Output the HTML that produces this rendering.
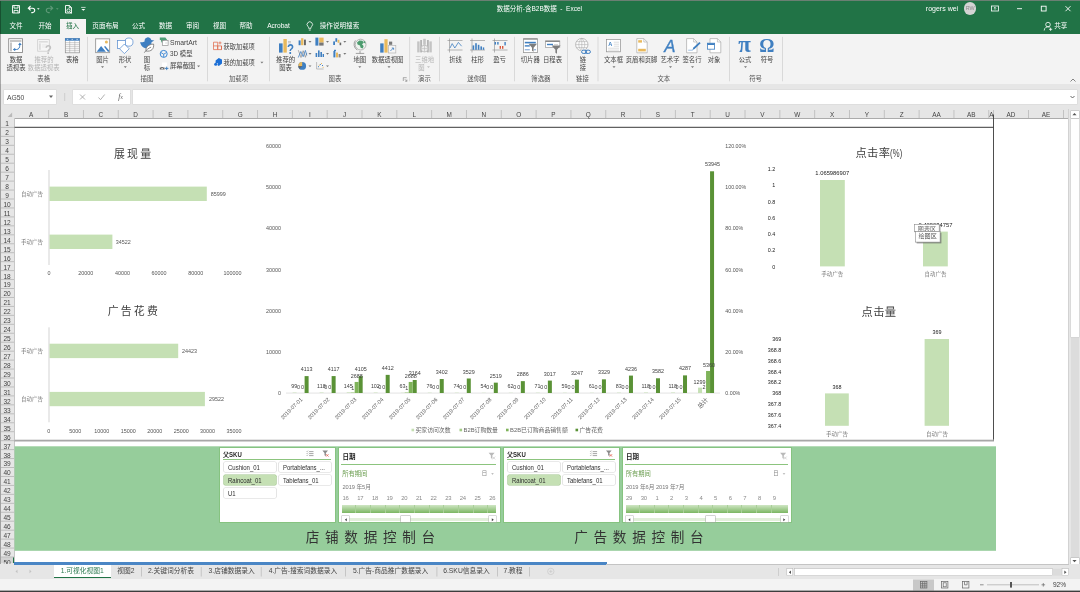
<!DOCTYPE html>
<html lang="zh-CN"><head><meta charset="utf-8"><title>数据分析-含B2B数据 - Excel</title>
<style>
html,body{margin:0;padding:0}
body{will-change:transform;width:1080px;height:592px;position:relative;overflow:hidden;background:#fff;font-family:"Liberation Sans","Noto Sans CJK SC",sans-serif;color:#444}
.a{position:absolute}
.t{position:absolute;white-space:nowrap;line-height:1}
.c{transform:translateX(-50%)}
svg{position:absolute;left:0;top:0;overflow:visible}
svg text{font-family:"Liberation Sans","Noto Sans CJK SC",sans-serif}
#titlebar{left:0;top:0;width:1080px;height:34px;background:#217346}
#ribbon{left:0;top:34px;width:1080px;height:50px;background:#f3f3f3}
#fbar{left:0;top:84px;width:1080px;height:25px;background:#e6e6e6}
#colhdr{left:0;top:109px;width:1069px;height:9px;background:#e6e6e6;border-bottom:1px solid #ababab}
#rowhdr{left:0;top:118px;width:14px;height:446px;background:#e6e6e6;border-right:1px solid #c6c6c6}
#sheet{left:15px;top:119px;width:1053px;height:445px;background:#fff}
#vscroll{left:1068px;top:109px;width:12px;height:456px;background:#e6e6e6}
#tabbar{left:0;top:564px;width:1080px;height:15px;background:#e6e6e6}
#status{left:0;top:579.3px;width:1080px;height:13px;background:#f3f3f3}
.rl{font-size:6.35px;color:#444}
.gl{font-size:6.4px;color:#555}
.tab{font-size:6.6px;color:#fff}
.ch{font-size:6.4px;color:#444}
.rh{font-size:7.3px;color:#444;letter-spacing:-0.1px}
.sb{font-size:6.8px;color:#2e2e2e;font-family:"Liberation Sans","Noto Sans CJK SC",sans-serif}
.st{font-size:6.75px;color:#444}
</style></head>
<body>
<div class="a" id="titlebar"></div>
<div class="t tab" style="font-size:6.5px;left:539.4px;top:9.2px;transform:translate(-50%,-50%);">数据分析-含B2B数据&nbsp; -&nbsp; Excel</div><div class="t tab" style="font-size:7px;left:942px;top:7.8px;transform:translate(-50%,-50%);">rogers wei</div><div class="a" style="left:963.8px;top:2.1px;width:12.5px;height:12.5px;border-radius:50%;background:#d4d4d4"></div><div class="t " style="font-size:5.4px;left:970.1px;top:9.0px;transform:translate(-50%,-50%);color:#8a8a8a">RW</div><div class="a " style="left:60px;top:18.5px;width:25.5px;height:16px;background:#f3f3f3;"></div><div class="t tab" style="left:16px;top:26.2px;transform:translate(-50%,-50%);">文件</div><div class="t tab" style="left:45px;top:26.2px;transform:translate(-50%,-50%);">开始</div><div class="t tab" style="left:72.5px;top:26.2px;transform:translate(-50%,-50%);color:#217346;">插入</div><div class="t tab" style="left:105.5px;top:26.2px;transform:translate(-50%,-50%);">页面布局</div><div class="t tab" style="left:138.5px;top:26.2px;transform:translate(-50%,-50%);">公式</div><div class="t tab" style="left:165.5px;top:26.2px;transform:translate(-50%,-50%);">数据</div><div class="t tab" style="left:192.5px;top:26.2px;transform:translate(-50%,-50%);">审阅</div><div class="t tab" style="left:219.5px;top:26.2px;transform:translate(-50%,-50%);">视图</div><div class="t tab" style="left:246px;top:26.2px;transform:translate(-50%,-50%);">帮助</div><div class="t tab" style="left:278.5px;top:26.2px;transform:translate(-50%,-50%);">Acrobat</div><div class="t tab" style="left:339.5px;top:26.2px;transform:translate(-50%,-50%);">操作说明搜索</div><div class="t tab" style="left:1060.8px;top:26.2px;transform:translate(-50%,-50%);">共享</div><svg width="1080" height="34" viewBox="0 0 1080 34">
<g fill="none" stroke="#fff" stroke-width="0.9">
<!-- save -->
<path d="M12.5 5.5h7v7.5h-7z M14 5.5v2.6h4v-2.6 M14 13v-2.6h4v2.6" />
<!-- undo -->
<path d="M28.5 8.2h4a2.2 2.2 0 0 1 0 4.4h-1.2 M30.6 6l-2.3 2.2l2.3 2.2" stroke-width="1.1"/>
<!-- redo dim -->
<path d="M52.5 8.2h-4a2.2 2.2 0 0 0 0 4.4h1.2 M50.4 6l2.3 2.2l-2.3 2.2" stroke="#5f9a78" stroke-width="1.1"/>
<!-- print preview -->
<path d="M65.5 13v-7.5h4l2 2v5.5z M69.3 5.5v2.2h2.2"/>
<circle cx="68.5" cy="10.5" r="1.6"/><path d="M69.7 11.7l1.8 1.8"/>
<!-- customize -->
<path d="M81.1 7.4h4.5" stroke-width="0.7"/>
<!-- bulb -->
<path d="M308 26.5a2.7 2.7 0 1 1 3.6 0c-.5.5-.6 1.2-.6 1.8h-2.4c0-.6-.1-1.3-.6-1.8z M308.8 30h2" stroke-width="0.8"/>
<!-- share person -->
<circle cx="1048" cy="24.6" r="2.3" stroke-width="0.8"/><path d="M1044.2 30.5a3.8 3.8 0 0 1 5.5-3.4 M1049 29.3h3.2 M1050.6 27.7v3.2" stroke-width="0.8"/>
<!-- window controls -->
<rect x="991.5" y="6" width="7" height="5" stroke-width="0.8"/><path d="M995 7.3v2.4 M993.9 8.4l1.1-1.1l1.1 1.1" stroke-width="0.7"/>
<path d="M1017 8.7h5"/>
<rect x="1041.3" y="6.2" width="4.8" height="4.8"/>
<path d="M1065.5 6.2l5 5 M1070.5 6.2l-5 5"/>
</g>
<g fill="#fff"><path d="M37 8.2h2.6l-1.3 1.5z"/><path d="M81.4 8.9h3.9l-1.950 1.9z"/></g>
<path d="M56 8.2h2.6l-1.3 1.5z" fill="#5f9a78"/>
</svg>
<div class="a" id="ribbon"></div>
<div class="a" id="fbar"></div>
<div class="a " style="left:3.5px;top:89.7px;width:52.5px;height:14.2px;background:#fff;box-shadow:0 0 0 0.5px #d6d6d6"></div><div class="t " style="font-size:6.8px;left:7px;top:97.8px;transform:translateY(-50%);color:#4a4a4a">AG50</div><div class="a " style="left:72.9px;top:89.7px;width:57px;height:14.2px;background:#fff;box-shadow:0 0 0 0.5px #d6d6d6"></div><div class="a " style="left:132.6px;top:89.7px;width:944.4px;height:14.2px;background:#fff;box-shadow:0 0 0 0.5px #d6d6d6"></div><svg width="1080" height="110" viewBox="0 0 1080 110">
<path d="M49 95.5h4l-2 2.4z" fill="#666"/>
<g fill="#b5b5b5"><rect x="64.2" y="93.5" width="1" height="1"/><rect x="64.2" y="95.5" width="1" height="1"/><rect x="64.2" y="97.5" width="1" height="1"/><rect x="64.2" y="99.5" width="1" height="1"/></g>
<g fill="none" stroke="#9c9c9c" stroke-width="0.8"><path d="M80 94.5l5 5 M85 94.5l-5 5"/><path d="M98.5 97.5l2 2.2l4.2-5.2"/></g>
<path d="M1070.5 96l2 2l2-2" fill="none" stroke="#555" stroke-width="0.9"/>
<path d="M1070.5 81.5l2.5-2.5l2.5 2.5" fill="none" stroke="#666" stroke-width="0.8"/>
</svg>
<div class="t " style="font-size:7.5px;left:120.5px;top:97px;transform:translate(-50%,-50%);color:#555"><i style="font-family:'Liberation Serif',serif">f</i><span style="font-size:4.5px">x</span></div><div class="a" id="colhdr"></div>
<div class="t ch" style="left:31.21px;top:114.7px;transform:translate(-50%,-50%);">A</div><div class="t ch" style="left:66.03px;top:114.7px;transform:translate(-50%,-50%);">B</div><div class="t ch" style="left:100.85px;top:114.7px;transform:translate(-50%,-50%);">C</div><div class="t ch" style="left:135.67000000000002px;top:114.7px;transform:translate(-50%,-50%);">D</div><div class="t ch" style="left:170.49px;top:114.7px;transform:translate(-50%,-50%);">E</div><div class="t ch" style="left:205.31px;top:114.7px;transform:translate(-50%,-50%);">F</div><div class="t ch" style="left:240.13000000000002px;top:114.7px;transform:translate(-50%,-50%);">G</div><div class="t ch" style="left:274.95000000000005px;top:114.7px;transform:translate(-50%,-50%);">H</div><div class="t ch" style="left:309.77000000000004px;top:114.7px;transform:translate(-50%,-50%);">I</div><div class="t ch" style="left:344.59000000000003px;top:114.7px;transform:translate(-50%,-50%);">J</div><div class="t ch" style="left:379.41px;top:114.7px;transform:translate(-50%,-50%);">K</div><div class="t ch" style="left:414.23px;top:114.7px;transform:translate(-50%,-50%);">L</div><div class="t ch" style="left:449.05000000000007px;top:114.7px;transform:translate(-50%,-50%);">M</div><div class="t ch" style="left:483.87000000000006px;top:114.7px;transform:translate(-50%,-50%);">N</div><div class="t ch" style="left:518.69px;top:114.7px;transform:translate(-50%,-50%);">O</div><div class="t ch" style="left:553.5099999999999px;top:114.7px;transform:translate(-50%,-50%);">P</div><div class="t ch" style="left:588.3299999999999px;top:114.7px;transform:translate(-50%,-50%);">Q</div><div class="t ch" style="left:623.15px;top:114.7px;transform:translate(-50%,-50%);">R</div><div class="t ch" style="left:657.9699999999999px;top:114.7px;transform:translate(-50%,-50%);">S</div><div class="t ch" style="left:692.79px;top:114.7px;transform:translate(-50%,-50%);">T</div><div class="t ch" style="left:727.6099999999999px;top:114.7px;transform:translate(-50%,-50%);">U</div><div class="t ch" style="left:762.43px;top:114.7px;transform:translate(-50%,-50%);">V</div><div class="t ch" style="left:797.2499999999999px;top:114.7px;transform:translate(-50%,-50%);">W</div><div class="t ch" style="left:832.0699999999999px;top:114.7px;transform:translate(-50%,-50%);">X</div><div class="t ch" style="left:866.89px;top:114.7px;transform:translate(-50%,-50%);">Y</div><div class="t ch" style="left:901.7099999999999px;top:114.7px;transform:translate(-50%,-50%);">Z</div><div class="t ch" style="left:936.53px;top:114.7px;transform:translate(-50%,-50%);">AA</div><div class="t ch" style="left:971.3499999999999px;top:114.7px;transform:translate(-50%,-50%);">AB</div><div class="t ch" style="left:991.5px;top:114.7px;transform:translate(-50%,-50%);">A</div><div class="t ch" style="left:1011px;top:114.7px;transform:translate(-50%,-50%);">AD</div><div class="t ch" style="left:1046px;top:114.7px;transform:translate(-50%,-50%);">AE</div><svg width="1080" height="120" viewBox="0 0 1080 120"><g fill="#c2c2c2"><rect x="48.12" y="110" width="1" height="8" /><rect x="82.94" y="110" width="1" height="8" /><rect x="117.76" y="110" width="1" height="8" /><rect x="152.58" y="110" width="1" height="8" /><rect x="187.40" y="110" width="1" height="8" /><rect x="222.22" y="110" width="1" height="8" /><rect x="257.04" y="110" width="1" height="8" /><rect x="291.86" y="110" width="1" height="8" /><rect x="326.68" y="110" width="1" height="8" /><rect x="361.50" y="110" width="1" height="8" /><rect x="396.32" y="110" width="1" height="8" /><rect x="431.14" y="110" width="1" height="8" /><rect x="465.96" y="110" width="1" height="8" /><rect x="500.78" y="110" width="1" height="8" /><rect x="535.60" y="110" width="1" height="8" /><rect x="570.42" y="110" width="1" height="8" /><rect x="605.24" y="110" width="1" height="8" /><rect x="640.06" y="110" width="1" height="8" /><rect x="674.88" y="110" width="1" height="8" /><rect x="709.70" y="110" width="1" height="8" /><rect x="744.52" y="110" width="1" height="8" /><rect x="779.34" y="110" width="1" height="8" /><rect x="814.16" y="110" width="1" height="8" /><rect x="848.98" y="110" width="1" height="8" /><rect x="883.80" y="110" width="1" height="8" /><rect x="918.62" y="110" width="1" height="8" /><rect x="953.44" y="110" width="1" height="8" /><rect x="988.26" y="110" width="1" height="8" /><rect x="993.00" y="110" width="1" height="8" /><rect x="1028.00" y="110" width="1" height="8" /><rect x="1063.00" y="110" width="1" height="8" /></g><path d="M7.600 116.900h4.500v-4.500z" fill="#b9b9b9"/></svg>
<div class="a" id="rowhdr"></div>
<div class="a" id="sheet"></div>
<div class="t rh" style="transform-origin:center center;left:7.2px;top:124.375px;transform:translate(-50%,-50%) scaleX(0.9);">1</div><div class="t rh" style="transform-origin:center center;left:7.2px;top:133.325px;transform:translate(-50%,-50%) scaleX(0.9);">2</div><div class="t rh" style="transform-origin:center center;left:7.2px;top:142.27499999999998px;transform:translate(-50%,-50%) scaleX(0.9);">3</div><div class="t rh" style="transform-origin:center center;left:7.2px;top:151.225px;transform:translate(-50%,-50%) scaleX(0.9);">4</div><div class="t rh" style="transform-origin:center center;left:7.2px;top:160.17499999999998px;transform:translate(-50%,-50%) scaleX(0.9);">5</div><div class="t rh" style="transform-origin:center center;left:7.2px;top:169.12499999999997px;transform:translate(-50%,-50%) scaleX(0.9);">6</div><div class="t rh" style="transform-origin:center center;left:7.2px;top:178.075px;transform:translate(-50%,-50%) scaleX(0.9);">7</div><div class="t rh" style="transform-origin:center center;left:7.2px;top:187.02499999999998px;transform:translate(-50%,-50%) scaleX(0.9);">8</div><div class="t rh" style="transform-origin:center center;left:7.2px;top:195.975px;transform:translate(-50%,-50%) scaleX(0.9);">9</div><div class="t rh" style="transform-origin:center center;left:7.2px;top:204.92499999999998px;transform:translate(-50%,-50%) scaleX(0.9);">10</div><div class="t rh" style="transform-origin:center center;left:7.2px;top:213.87499999999997px;transform:translate(-50%,-50%) scaleX(0.9);">11</div><div class="t rh" style="transform-origin:center center;left:7.2px;top:222.82499999999996px;transform:translate(-50%,-50%) scaleX(0.9);">12</div><div class="t rh" style="transform-origin:center center;left:7.2px;top:231.77499999999998px;transform:translate(-50%,-50%) scaleX(0.9);">13</div><div class="t rh" style="transform-origin:center center;left:7.2px;top:240.725px;transform:translate(-50%,-50%) scaleX(0.9);">14</div><div class="t rh" style="transform-origin:center center;left:7.2px;top:249.67499999999998px;transform:translate(-50%,-50%) scaleX(0.9);">15</div><div class="t rh" style="transform-origin:center center;left:7.2px;top:258.625px;transform:translate(-50%,-50%) scaleX(0.9);">16</div><div class="t rh" style="transform-origin:center center;left:7.2px;top:267.575px;transform:translate(-50%,-50%) scaleX(0.9);">17</div><div class="t rh" style="transform-origin:center center;left:7.2px;top:276.525px;transform:translate(-50%,-50%) scaleX(0.9);">18</div><div class="t rh" style="transform-origin:center center;left:7.2px;top:285.475px;transform:translate(-50%,-50%) scaleX(0.9);">19</div><div class="t rh" style="transform-origin:center center;left:7.2px;top:294.425px;transform:translate(-50%,-50%) scaleX(0.9);">20</div><div class="t rh" style="transform-origin:center center;left:7.2px;top:303.375px;transform:translate(-50%,-50%) scaleX(0.9);">21</div><div class="t rh" style="transform-origin:center center;left:7.2px;top:312.325px;transform:translate(-50%,-50%) scaleX(0.9);">22</div><div class="t rh" style="transform-origin:center center;left:7.2px;top:321.275px;transform:translate(-50%,-50%) scaleX(0.9);">23</div><div class="t rh" style="transform-origin:center center;left:7.2px;top:330.225px;transform:translate(-50%,-50%) scaleX(0.9);">24</div><div class="t rh" style="transform-origin:center center;left:7.2px;top:339.175px;transform:translate(-50%,-50%) scaleX(0.9);">25</div><div class="t rh" style="transform-origin:center center;left:7.2px;top:348.125px;transform:translate(-50%,-50%) scaleX(0.9);">26</div><div class="t rh" style="transform-origin:center center;left:7.2px;top:357.075px;transform:translate(-50%,-50%) scaleX(0.9);">27</div><div class="t rh" style="transform-origin:center center;left:7.2px;top:366.025px;transform:translate(-50%,-50%) scaleX(0.9);">28</div><div class="t rh" style="transform-origin:center center;left:7.2px;top:374.97499999999997px;transform:translate(-50%,-50%) scaleX(0.9);">29</div><div class="t rh" style="transform-origin:center center;left:7.2px;top:383.92499999999995px;transform:translate(-50%,-50%) scaleX(0.9);">30</div><div class="t rh" style="transform-origin:center center;left:7.2px;top:392.875px;transform:translate(-50%,-50%) scaleX(0.9);">31</div><div class="t rh" style="transform-origin:center center;left:7.2px;top:401.825px;transform:translate(-50%,-50%) scaleX(0.9);">32</div><div class="t rh" style="transform-origin:center center;left:7.2px;top:410.775px;transform:translate(-50%,-50%) scaleX(0.9);">33</div><div class="t rh" style="transform-origin:center center;left:7.2px;top:419.72499999999997px;transform:translate(-50%,-50%) scaleX(0.9);">34</div><div class="t rh" style="transform-origin:center center;left:7.2px;top:428.67499999999995px;transform:translate(-50%,-50%) scaleX(0.9);">35</div><div class="t rh" style="transform-origin:center center;left:7.2px;top:437.625px;transform:translate(-50%,-50%) scaleX(0.9);">36</div><div class="t rh" style="transform-origin:center center;left:7.2px;top:446.575px;transform:translate(-50%,-50%) scaleX(0.9);">37</div><div class="t rh" style="transform-origin:center center;left:7.2px;top:455.525px;transform:translate(-50%,-50%) scaleX(0.9);">38</div><div class="t rh" style="transform-origin:center center;left:7.2px;top:464.47499999999997px;transform:translate(-50%,-50%) scaleX(0.9);">39</div><div class="t rh" style="transform-origin:center center;left:7.2px;top:473.42499999999995px;transform:translate(-50%,-50%) scaleX(0.9);">40</div><div class="t rh" style="transform-origin:center center;left:7.2px;top:482.375px;transform:translate(-50%,-50%) scaleX(0.9);">41</div><div class="t rh" style="transform-origin:center center;left:7.2px;top:491.325px;transform:translate(-50%,-50%) scaleX(0.9);">42</div><div class="t rh" style="transform-origin:center center;left:7.2px;top:500.275px;transform:translate(-50%,-50%) scaleX(0.9);">43</div><div class="t rh" style="transform-origin:center center;left:7.2px;top:509.22499999999997px;transform:translate(-50%,-50%) scaleX(0.9);">44</div><div class="t rh" style="transform-origin:center center;left:7.2px;top:518.1750000000001px;transform:translate(-50%,-50%) scaleX(0.9);">45</div><div class="t rh" style="transform-origin:center center;left:7.2px;top:527.125px;transform:translate(-50%,-50%) scaleX(0.9);">46</div><div class="t rh" style="transform-origin:center center;left:7.2px;top:536.075px;transform:translate(-50%,-50%) scaleX(0.9);">47</div><div class="t rh" style="transform-origin:center center;left:7.2px;top:545.0250000000001px;transform:translate(-50%,-50%) scaleX(0.9);">48</div><div class="t rh" style="transform-origin:center center;left:7.2px;top:553.975px;transform:translate(-50%,-50%) scaleX(0.9);">49</div><div class="a " style="left:1px;top:557.0px;width:13px;height:5.5px;background:#d3d3d3;border-right:1.5px solid #217346;width:11.5px"></div><div class="t rh" style="transform-origin:center center;left:7.2px;top:562.9250000000001px;transform:translate(-50%,-50%) scaleX(0.9);color:#444;">50</div><svg width="20" height="592" viewBox="0 0 20 592"><g fill="#bebebe"><rect x="1" y="126.90" width="13" height="1"/><rect x="1" y="135.85" width="13" height="1"/><rect x="1" y="144.80" width="13" height="1"/><rect x="1" y="153.75" width="13" height="1"/><rect x="1" y="162.70" width="13" height="1"/><rect x="1" y="171.65" width="13" height="1"/><rect x="1" y="180.60" width="13" height="1"/><rect x="1" y="189.55" width="13" height="1"/><rect x="1" y="198.50" width="13" height="1"/><rect x="1" y="207.45" width="13" height="1"/><rect x="1" y="216.40" width="13" height="1"/><rect x="1" y="225.35" width="13" height="1"/><rect x="1" y="234.30" width="13" height="1"/><rect x="1" y="243.25" width="13" height="1"/><rect x="1" y="252.20" width="13" height="1"/><rect x="1" y="261.15" width="13" height="1"/><rect x="1" y="270.10" width="13" height="1"/><rect x="1" y="279.05" width="13" height="1"/><rect x="1" y="288.00" width="13" height="1"/><rect x="1" y="296.95" width="13" height="1"/><rect x="1" y="305.90" width="13" height="1"/><rect x="1" y="314.85" width="13" height="1"/><rect x="1" y="323.80" width="13" height="1"/><rect x="1" y="332.75" width="13" height="1"/><rect x="1" y="341.70" width="13" height="1"/><rect x="1" y="350.65" width="13" height="1"/><rect x="1" y="359.60" width="13" height="1"/><rect x="1" y="368.55" width="13" height="1"/><rect x="1" y="377.50" width="13" height="1"/><rect x="1" y="386.45" width="13" height="1"/><rect x="1" y="395.40" width="13" height="1"/><rect x="1" y="404.35" width="13" height="1"/><rect x="1" y="413.30" width="13" height="1"/><rect x="1" y="422.25" width="13" height="1"/><rect x="1" y="431.20" width="13" height="1"/><rect x="1" y="440.15" width="13" height="1"/><rect x="1" y="449.10" width="13" height="1"/><rect x="1" y="458.05" width="13" height="1"/><rect x="1" y="467.00" width="13" height="1"/><rect x="1" y="475.95" width="13" height="1"/><rect x="1" y="484.90" width="13" height="1"/><rect x="1" y="493.85" width="13" height="1"/><rect x="1" y="502.80" width="13" height="1"/><rect x="1" y="511.75" width="13" height="1"/><rect x="1" y="520.70" width="13" height="1"/><rect x="1" y="529.65" width="13" height="1"/><rect x="1" y="538.60" width="13" height="1"/><rect x="1" y="547.55" width="13" height="1"/><rect x="1" y="556.50" width="13" height="1"/></g></svg>
<div class="a " style="left:0px;top:0px;width:1px;height:592px;background:#000;opacity:.3"></div><div class="a " style="left:0px;top:0px;width:1080px;height:1px;background:#6b7f73;"></div><svg width="1080" height="592" viewBox="0 0 1080 592"><path d="M14.5 127.3H993.5" stroke="#3a3a3a" stroke-width="1" fill="none"/>
<path d="M993.5 114.5V440.5" stroke="#3a3a3a" stroke-width="0.9" fill="none"/>
<rect x="14.5" y="439.6" width="979.5" height="1.1" fill="#bdbdbd"/><rect x="14.5" y="440.6" width="979.5" height="0.7" fill="#6a6a6a"/>
<rect x="14.5" y="446.3" width="981.5" height="104.5" fill="#96cd9b"/>
<rect x="48.5" y="170" width="1" height="95" fill="#d4d4d4"/>
<rect x="49.5" y="186.6" width="157.3" height="14.4" fill="#c5e0b4"/>
<rect x="49.5" y="234.6" width="62.9" height="14.4" fill="#c5e0b4"/>
<text x="114.00" y="157.70" font-size="10.9" text-anchor="start" fill="#404040" letter-spacing="2.2">展现量</text>
<text x="32.00" y="196.00" font-size="5.5" text-anchor="middle" fill="#555" style="font-family:'Liberation Serif','Noto Serif CJK SC',serif">自动广告</text>
<text x="32.00" y="244.00" font-size="5.5" text-anchor="middle" fill="#555" style="font-family:'Liberation Serif','Noto Serif CJK SC',serif">手动广告</text>
<text x="218.30" y="196.00" font-size="5.4" text-anchor="middle" fill="#555" >85999</text>
<text x="123.30" y="244.00" font-size="5.4" text-anchor="middle" fill="#555" >34522</text>
<text x="49.00" y="275.30" font-size="5.4" text-anchor="middle" fill="#555" >0</text>
<text x="85.70" y="275.30" font-size="5.4" text-anchor="middle" fill="#555" >20000</text>
<text x="122.40" y="275.30" font-size="5.4" text-anchor="middle" fill="#555" >40000</text>
<text x="159.10" y="275.30" font-size="5.4" text-anchor="middle" fill="#555" >60000</text>
<text x="195.80" y="275.30" font-size="5.4" text-anchor="middle" fill="#555" >80000</text>
<text x="232.50" y="275.30" font-size="5.4" text-anchor="middle" fill="#555" >100000</text>
<rect x="48.5" y="327.3" width="1" height="95" fill="#d4d4d4"/>
<rect x="49.5" y="343.7" width="128.7" height="14.4" fill="#c5e0b4"/>
<rect x="49.5" y="391.9" width="155.4" height="14.3" fill="#c5e0b4"/>
<text x="107.70" y="315.20" font-size="10.9" text-anchor="start" fill="#404040" letter-spacing="2.2">广告花费</text>
<text x="32.00" y="352.80" font-size="5.5" text-anchor="middle" fill="#555" style="font-family:'Liberation Serif','Noto Serif CJK SC',serif">手动广告</text>
<text x="32.00" y="401.00" font-size="5.5" text-anchor="middle" fill="#555" style="font-family:'Liberation Serif','Noto Serif CJK SC',serif">自动广告</text>
<text x="189.60" y="352.80" font-size="5.4" text-anchor="middle" fill="#555" >24423</text>
<text x="216.60" y="401.00" font-size="5.4" text-anchor="middle" fill="#555" >29522</text>
<text x="48.80" y="432.80" font-size="5.4" text-anchor="middle" fill="#555" >0</text>
<text x="75.27" y="432.80" font-size="5.4" text-anchor="middle" fill="#555" >5000</text>
<text x="101.74" y="432.80" font-size="5.4" text-anchor="middle" fill="#555" >10000</text>
<text x="128.21" y="432.80" font-size="5.4" text-anchor="middle" fill="#555" >15000</text>
<text x="154.68" y="432.80" font-size="5.4" text-anchor="middle" fill="#555" >20000</text>
<text x="181.15" y="432.80" font-size="5.4" text-anchor="middle" fill="#555" >25000</text>
<text x="207.62" y="432.80" font-size="5.4" text-anchor="middle" fill="#555" >30000</text>
<text x="234.09" y="432.80" font-size="5.4" text-anchor="middle" fill="#555" >35000</text>
<text x="281.00" y="395.00" font-size="5.4" text-anchor="end" fill="#555" >0</text>
<text x="725.30" y="395.00" font-size="5.3" text-anchor="start" fill="#555" >0.00%</text>
<text x="281.00" y="353.90" font-size="5.4" text-anchor="end" fill="#555" >10000</text>
<text x="725.30" y="353.90" font-size="5.3" text-anchor="start" fill="#555" >20.00%</text>
<text x="281.00" y="312.80" font-size="5.4" text-anchor="end" fill="#555" >20000</text>
<text x="725.30" y="312.80" font-size="5.3" text-anchor="start" fill="#555" >40.00%</text>
<text x="281.00" y="271.70" font-size="5.4" text-anchor="end" fill="#555" >30000</text>
<text x="725.30" y="271.70" font-size="5.3" text-anchor="start" fill="#555" >60.00%</text>
<text x="281.00" y="229.90" font-size="5.4" text-anchor="end" fill="#555" >40000</text>
<text x="725.30" y="229.90" font-size="5.3" text-anchor="start" fill="#555" >80.00%</text>
<text x="281.00" y="189.00" font-size="5.4" text-anchor="end" fill="#555" >50000</text>
<text x="725.30" y="189.00" font-size="5.3" text-anchor="start" fill="#555" >100.00%</text>
<text x="281.00" y="148.00" font-size="5.4" text-anchor="end" fill="#555" >60000</text>
<text x="725.30" y="148.00" font-size="5.3" text-anchor="start" fill="#555" >120.00%</text>
<rect x="286" y="392.6" width="434" height="0.9" fill="#e0e0e0"/>
<rect x="304.60" y="376.10" width="4" height="16.90" fill="#5a9236"/>
<text x="306.60" y="371.10" font-size="5.4" text-anchor="middle" fill="#404040" >4113</text>
<rect x="292.60" y="392.59" width="4" height="0.41" fill="#c5e0b4"/>
<text x="294.30" y="388.20" font-size="5.4" text-anchor="middle" fill="#404040" >99</text>
<text x="298.60" y="389.30" font-size="5.4" text-anchor="middle" fill="#404040" >0</text>
<text x="302.60" y="389.30" font-size="5.4" text-anchor="middle" fill="#404040" >0</text>
<text transform="translate(302.80,399.90) rotate(-45)" font-size="5.5" text-anchor="end" fill="#555">2019-07-01</text>
<rect x="331.63" y="376.08" width="4" height="16.92" fill="#5a9236"/>
<text x="333.63" y="371.08" font-size="5.4" text-anchor="middle" fill="#404040" >4117</text>
<rect x="319.63" y="392.52" width="4" height="0.48" fill="#c5e0b4"/>
<text x="321.33" y="388.20" font-size="5.4" text-anchor="middle" fill="#404040" >118</text>
<text x="325.63" y="389.30" font-size="5.4" text-anchor="middle" fill="#404040" >0</text>
<text x="329.63" y="389.30" font-size="5.4" text-anchor="middle" fill="#404040" >0</text>
<text transform="translate(329.83,399.90) rotate(-45)" font-size="5.5" text-anchor="end" fill="#555">2019-07-02</text>
<rect x="358.66" y="376.13" width="4" height="16.87" fill="#5a9236"/>
<text x="360.66" y="371.13" font-size="5.4" text-anchor="middle" fill="#404040" >4105</text>
<rect x="346.66" y="392.40" width="4" height="0.60" fill="#c5e0b4"/>
<text x="348.36" y="388.20" font-size="5.4" text-anchor="middle" fill="#404040" >145</text>
<rect x="354.66" y="381.95" width="4" height="11.05" fill="#7fb35a"/>
<rect x="350.66" y="392.40" width="4" height="0.60" fill="#a2cb84"/>
<text x="356.66" y="378.45" font-size="5.4" text-anchor="middle" fill="#404040" >2688</text>
<text x="352.66" y="389.50" font-size="5.4" text-anchor="middle" fill="#404040" >1</text>
<text transform="translate(356.86,399.90) rotate(-45)" font-size="5.5" text-anchor="end" fill="#555">2019-07-03</text>
<rect x="385.69" y="374.87" width="4" height="18.13" fill="#5a9236"/>
<text x="387.69" y="369.87" font-size="5.4" text-anchor="middle" fill="#404040" >4412</text>
<rect x="373.69" y="392.58" width="4" height="0.42" fill="#c5e0b4"/>
<text x="375.39" y="388.20" font-size="5.4" text-anchor="middle" fill="#404040" >102</text>
<text x="379.69" y="389.30" font-size="5.4" text-anchor="middle" fill="#404040" >0</text>
<text x="383.69" y="389.30" font-size="5.4" text-anchor="middle" fill="#404040" >0</text>
<text transform="translate(383.89,399.90) rotate(-45)" font-size="5.5" text-anchor="end" fill="#555">2019-07-04</text>
<rect x="412.72" y="380.00" width="4" height="13.00" fill="#5a9236"/>
<text x="414.72" y="375.00" font-size="5.4" text-anchor="middle" fill="#404040" >3164</text>
<rect x="400.72" y="392.74" width="4" height="0.26" fill="#c5e0b4"/>
<text x="402.42" y="388.20" font-size="5.4" text-anchor="middle" fill="#404040" >63</text>
<rect x="408.72" y="381.95" width="4" height="11.05" fill="#7fb35a"/>
<rect x="404.72" y="392.40" width="4" height="0.60" fill="#a2cb84"/>
<text x="410.72" y="378.45" font-size="5.4" text-anchor="middle" fill="#404040" >2688</text>
<text x="406.72" y="389.50" font-size="5.4" text-anchor="middle" fill="#404040" >1</text>
<text transform="translate(410.92,399.90) rotate(-45)" font-size="5.5" text-anchor="end" fill="#555">2019-07-05</text>
<rect x="439.75" y="379.02" width="4" height="13.98" fill="#5a9236"/>
<text x="441.75" y="374.02" font-size="5.4" text-anchor="middle" fill="#404040" >3402</text>
<rect x="427.75" y="392.69" width="4" height="0.31" fill="#c5e0b4"/>
<text x="429.45" y="388.20" font-size="5.4" text-anchor="middle" fill="#404040" >76</text>
<text x="433.75" y="389.30" font-size="5.4" text-anchor="middle" fill="#404040" >0</text>
<text x="437.75" y="389.30" font-size="5.4" text-anchor="middle" fill="#404040" >0</text>
<text transform="translate(437.95,399.90) rotate(-45)" font-size="5.5" text-anchor="end" fill="#555">2019-07-06</text>
<rect x="466.78" y="378.50" width="4" height="14.50" fill="#5a9236"/>
<text x="468.78" y="373.50" font-size="5.4" text-anchor="middle" fill="#404040" >3529</text>
<rect x="454.78" y="392.70" width="4" height="0.30" fill="#c5e0b4"/>
<text x="456.48" y="388.20" font-size="5.4" text-anchor="middle" fill="#404040" >74</text>
<text x="460.78" y="389.30" font-size="5.4" text-anchor="middle" fill="#404040" >0</text>
<text x="464.78" y="389.30" font-size="5.4" text-anchor="middle" fill="#404040" >0</text>
<text transform="translate(464.98,399.90) rotate(-45)" font-size="5.5" text-anchor="end" fill="#555">2019-07-07</text>
<rect x="493.81" y="382.65" width="4" height="10.35" fill="#5a9236"/>
<text x="495.81" y="377.65" font-size="5.4" text-anchor="middle" fill="#404040" >2519</text>
<rect x="481.81" y="392.78" width="4" height="0.22" fill="#c5e0b4"/>
<text x="483.51" y="388.20" font-size="5.4" text-anchor="middle" fill="#404040" >54</text>
<text x="487.81" y="389.30" font-size="5.4" text-anchor="middle" fill="#404040" >0</text>
<text x="491.81" y="389.30" font-size="5.4" text-anchor="middle" fill="#404040" >0</text>
<text transform="translate(492.01,399.90) rotate(-45)" font-size="5.5" text-anchor="end" fill="#555">2019-07-08</text>
<rect x="520.84" y="381.14" width="4" height="11.86" fill="#5a9236"/>
<text x="522.84" y="376.14" font-size="5.4" text-anchor="middle" fill="#404040" >2886</text>
<rect x="508.84" y="392.75" width="4" height="0.25" fill="#c5e0b4"/>
<text x="510.54" y="388.20" font-size="5.4" text-anchor="middle" fill="#404040" >62</text>
<text x="514.84" y="389.30" font-size="5.4" text-anchor="middle" fill="#404040" >0</text>
<text x="518.84" y="389.30" font-size="5.4" text-anchor="middle" fill="#404040" >0</text>
<text transform="translate(519.04,399.90) rotate(-45)" font-size="5.5" text-anchor="end" fill="#555">2019-07-09</text>
<rect x="547.87" y="380.60" width="4" height="12.40" fill="#5a9236"/>
<text x="549.87" y="375.60" font-size="5.4" text-anchor="middle" fill="#404040" >3017</text>
<rect x="535.87" y="392.71" width="4" height="0.29" fill="#c5e0b4"/>
<text x="537.57" y="388.20" font-size="5.4" text-anchor="middle" fill="#404040" >71</text>
<text x="541.87" y="389.30" font-size="5.4" text-anchor="middle" fill="#404040" >0</text>
<text x="545.87" y="389.30" font-size="5.4" text-anchor="middle" fill="#404040" >0</text>
<text transform="translate(546.07,399.90) rotate(-45)" font-size="5.5" text-anchor="end" fill="#555">2019-07-10</text>
<rect x="574.90" y="379.65" width="4" height="13.35" fill="#5a9236"/>
<text x="576.90" y="374.65" font-size="5.4" text-anchor="middle" fill="#404040" >3247</text>
<rect x="562.90" y="392.76" width="4" height="0.24" fill="#c5e0b4"/>
<text x="564.60" y="388.20" font-size="5.4" text-anchor="middle" fill="#404040" >59</text>
<text x="568.90" y="389.30" font-size="5.4" text-anchor="middle" fill="#404040" >0</text>
<text x="572.90" y="389.30" font-size="5.4" text-anchor="middle" fill="#404040" >0</text>
<text transform="translate(573.10,399.90) rotate(-45)" font-size="5.5" text-anchor="end" fill="#555">2019-07-11</text>
<rect x="601.93" y="379.32" width="4" height="13.68" fill="#5a9236"/>
<text x="603.93" y="374.32" font-size="5.4" text-anchor="middle" fill="#404040" >3329</text>
<rect x="589.93" y="392.75" width="4" height="0.25" fill="#c5e0b4"/>
<text x="591.63" y="388.20" font-size="5.4" text-anchor="middle" fill="#404040" >61</text>
<text x="595.93" y="389.30" font-size="5.4" text-anchor="middle" fill="#404040" >0</text>
<text x="599.93" y="389.30" font-size="5.4" text-anchor="middle" fill="#404040" >0</text>
<text transform="translate(600.13,399.90) rotate(-45)" font-size="5.5" text-anchor="end" fill="#555">2019-07-12</text>
<rect x="628.96" y="375.59" width="4" height="17.41" fill="#5a9236"/>
<text x="630.96" y="370.59" font-size="5.4" text-anchor="middle" fill="#404040" >4236</text>
<rect x="616.96" y="392.66" width="4" height="0.34" fill="#c5e0b4"/>
<text x="618.66" y="388.20" font-size="5.4" text-anchor="middle" fill="#404040" >83</text>
<text x="622.96" y="389.30" font-size="5.4" text-anchor="middle" fill="#404040" >0</text>
<text x="626.96" y="389.30" font-size="5.4" text-anchor="middle" fill="#404040" >0</text>
<text transform="translate(627.16,399.90) rotate(-45)" font-size="5.5" text-anchor="end" fill="#555">2019-07-13</text>
<rect x="655.99" y="378.28" width="4" height="14.72" fill="#5a9236"/>
<text x="657.99" y="373.28" font-size="5.4" text-anchor="middle" fill="#404040" >3582</text>
<rect x="643.99" y="392.52" width="4" height="0.48" fill="#c5e0b4"/>
<text x="645.69" y="388.20" font-size="5.4" text-anchor="middle" fill="#404040" >118</text>
<text x="649.99" y="389.30" font-size="5.4" text-anchor="middle" fill="#404040" >0</text>
<text x="653.99" y="389.30" font-size="5.4" text-anchor="middle" fill="#404040" >0</text>
<text transform="translate(654.19,399.90) rotate(-45)" font-size="5.5" text-anchor="end" fill="#555">2019-07-14</text>
<rect x="683.02" y="375.38" width="4" height="17.62" fill="#5a9236"/>
<text x="685.02" y="370.38" font-size="5.4" text-anchor="middle" fill="#404040" >4287</text>
<rect x="671.02" y="392.52" width="4" height="0.48" fill="#c5e0b4"/>
<text x="672.72" y="388.20" font-size="5.4" text-anchor="middle" fill="#404040" >118</text>
<text x="677.02" y="389.30" font-size="5.4" text-anchor="middle" fill="#404040" >0</text>
<text x="681.02" y="389.30" font-size="5.4" text-anchor="middle" fill="#404040" >0</text>
<text transform="translate(681.22,399.90) rotate(-45)" font-size="5.5" text-anchor="end" fill="#555">2019-07-15</text>
<rect x="698.05" y="387.66" width="4" height="5.34" fill="#c5e0b4"/>
<rect x="706.05" y="370.97" width="4" height="22.03" fill="#7fb35a"/>
<rect x="710.05" y="171.29" width="4" height="221.71" fill="#5a9236"/>
<text x="712.55" y="166.00" font-size="5.4" text-anchor="middle" fill="#404040" >53945</text>
<text x="699.55" y="383.50" font-size="5.4" text-anchor="middle" fill="#404040" >1299</text>
<text x="704.05" y="388.70" font-size="5.4" text-anchor="middle" fill="#404040" >2</text>
<text x="709.05" y="366.70" font-size="5.4" text-anchor="middle" fill="#404040" >5360</text>
<text transform="translate(708.65,400.30) rotate(-45)" font-size="6.2" text-anchor="end" fill="#555">总计</text>
<rect x="411.5" y="428.7" width="2.6" height="2.6" fill="#c5e0b4"/>
<text x="415.50" y="432.10" font-size="5.85" text-anchor="start" fill="#666" >买家访问次数</text>
<rect x="459.5" y="428.7" width="2.6" height="2.6" fill="#a2cb84"/>
<text x="463.50" y="432.10" font-size="5.85" text-anchor="start" fill="#666" >B2B订购数量</text>
<rect x="506.0" y="428.7" width="2.6" height="2.6" fill="#7fb35a"/>
<text x="510.00" y="432.10" font-size="5.85" text-anchor="start" fill="#666" >B2B已订购商品销售额</text>
<rect x="575.5" y="428.7" width="2.6" height="2.6" fill="#5a9236"/>
<text x="579.50" y="432.10" font-size="5.85" text-anchor="start" fill="#666" >广告花费</text>
<text x="855.50" y="156.50" font-size="11.3" text-anchor="start" fill="#404040" letter-spacing="0.3">点击率<tspan font-size="10.6" dx="-0.3" textLength="12.6" lengthAdjust="spacingAndGlyphs">(%)</tspan></text>
<text x="775.30" y="268.50" font-size="5.4" text-anchor="end" fill="#222" >0</text>
<text x="775.30" y="252.25" font-size="5.4" text-anchor="end" fill="#222" >0.2</text>
<text x="775.30" y="236.00" font-size="5.4" text-anchor="end" fill="#222" >0.4</text>
<text x="775.30" y="219.75" font-size="5.4" text-anchor="end" fill="#222" >0.6</text>
<text x="775.30" y="203.50" font-size="5.4" text-anchor="end" fill="#222" >0.8</text>
<text x="775.30" y="187.25" font-size="5.4" text-anchor="end" fill="#222" >1</text>
<text x="775.30" y="171.00" font-size="5.4" text-anchor="end" fill="#222" >1.2</text>
<rect x="820" y="180" width="24.8" height="86.4" fill="#c5e0b4"/>
<rect x="923" y="231.6" width="24.8" height="34.8" fill="#c5e0b4"/>
<text x="832.30" y="175.00" font-size="5.8" text-anchor="middle" fill="#222" >1.065986907</text>
<text x="935.50" y="227.30" font-size="5.8" text-anchor="middle" fill="#222" >0.429034757</text>
<text x="832.30" y="276.00" font-size="5.5" text-anchor="middle" fill="#555" style="font-family:'Liberation Serif','Noto Serif CJK SC',serif">手动广告</text>
<text x="935.50" y="276.00" font-size="5.5" text-anchor="middle" fill="#555" style="font-family:'Liberation Serif','Noto Serif CJK SC',serif">自动广告</text>
<rect x="915.6" y="225.4" width="25" height="7" fill="#777" opacity="0.55"/>
<rect x="914.4" y="224.4" width="24.8" height="7.4" fill="#fff" stroke="#8a8a8a" stroke-width="0.6"/>
<text x="927.00" y="230.50" font-size="6.1" text-anchor="middle" fill="#666" >图表区</text>
<rect x="916.6" y="232.8" width="24.8" height="10.6" fill="#555" opacity="0.6"/>
<rect x="915.3" y="231.5" width="24.8" height="10.6" fill="#fff" stroke="#8a8a8a" stroke-width="0.6"/>
<text x="927.60" y="237.90" font-size="6.1" text-anchor="middle" fill="#555" >绘图区</text>
<text x="879.00" y="316.30" font-size="11.3" text-anchor="middle" fill="#404040" letter-spacing="0.3">点击量</text>
<text x="781.20" y="427.80" font-size="5.4" text-anchor="end" fill="#222" >367.4</text>
<text x="781.20" y="416.95" font-size="5.4" text-anchor="end" fill="#222" >367.6</text>
<text x="781.20" y="406.10" font-size="5.4" text-anchor="end" fill="#222" >367.8</text>
<text x="781.20" y="395.25" font-size="5.4" text-anchor="end" fill="#222" >368</text>
<text x="781.20" y="384.40" font-size="5.4" text-anchor="end" fill="#222" >368.2</text>
<text x="781.20" y="373.55" font-size="5.4" text-anchor="end" fill="#222" >368.4</text>
<text x="781.20" y="362.70" font-size="5.4" text-anchor="end" fill="#222" >368.6</text>
<text x="781.20" y="351.85" font-size="5.4" text-anchor="end" fill="#222" >368.8</text>
<text x="781.20" y="341.00" font-size="5.4" text-anchor="end" fill="#222" >369</text>
<rect x="825" y="393.4" width="23.8" height="32.4" fill="#c5e0b4"/>
<rect x="924.6" y="339" width="24.4" height="86.8" fill="#c5e0b4"/>
<text x="837.00" y="389.00" font-size="5.4" text-anchor="middle" fill="#222" >368</text>
<text x="937.00" y="334.30" font-size="5.4" text-anchor="middle" fill="#222" >369</text>
<text x="837.00" y="435.70" font-size="5.5" text-anchor="middle" fill="#555" style="font-family:'Liberation Serif','Noto Serif CJK SC',serif">手动广告</text>
<text x="937.00" y="435.70" font-size="5.5" text-anchor="middle" fill="#555" style="font-family:'Liberation Serif','Noto Serif CJK SC',serif">自动广告</text></svg>
<div class="a " style="left:219.9px;top:448.2px;width:115.3px;height:73.8px;background:#fff;box-shadow:0 0 0 0.9px #84c27e"></div><div class="t " style="font-size:7px;transform-origin:left center;left:223.4px;top:453.5px;transform:translateY(-50%) scaleX(0.86);color:#2a2a2a"><b>父SKU</b></div><div class="a " style="left:223.4px;top:459px;width:107.8px;height:0.9px;background:#8cc47e;"></div><div class="a " style="left:223.9px;top:461.7px;width:52px;height:10.4px;background:#fff;border-radius:1.2px;box-shadow:0 0 0 0.6px #d4d4d4"></div><div class="t sb" style="transform-origin:left center;left:227.9px;top:467.59999999999997px;transform:translateY(-50%) scaleX(0.88);">Cushion_01</div><div class="a " style="left:278.9px;top:461.7px;width:52px;height:10.4px;background:#fff;border-radius:1.2px;box-shadow:0 0 0 0.6px #d4d4d4"></div><div class="t sb" style="transform-origin:left center;left:282.9px;top:467.59999999999997px;transform:translateY(-50%) scaleX(0.88);">Portablefans_...</div><div class="a " style="left:223.9px;top:474.8px;width:52px;height:10.4px;background:#c5e0b4;border-radius:1.2px;box-shadow:0 0 0 0.6px #9cc287"></div><div class="t sb" style="transform-origin:left center;left:227.9px;top:480.7px;transform:translateY(-50%) scaleX(0.88);">Raincoat_01</div><div class="a " style="left:278.9px;top:474.8px;width:52px;height:10.4px;background:#fff;border-radius:1.2px;box-shadow:0 0 0 0.6px #d4d4d4"></div><div class="t sb" style="transform-origin:left center;left:282.9px;top:480.7px;transform:translateY(-50%) scaleX(0.88);">Tablefans_01</div><div class="a " style="left:223.9px;top:487.9px;width:52px;height:10.4px;background:#fff;border-radius:1.2px;box-shadow:0 0 0 0.6px #d4d4d4"></div><div class="t sb" style="transform-origin:left center;left:227.9px;top:493.79999999999995px;transform:translateY(-50%) scaleX(0.88);">U1</div><svg width="1080" height="592" viewBox="0 0 1080 592"><g fill="none" stroke="#808080" stroke-width="0.7"><path d="M309.1 451.6h4.4M309.1 453.6h4.4M309.1 455.6h4.4"/><path d="M306.5 451.2l.6.6l1-1.2M306.5 453.2l.6.6l1-1.2M306.5 455.2l.6.6l1-1.2" stroke-width="0.5"/></g><path d="M322.4 450.5h5.6l-2.1 2.5v3.2l-1.4-1v-2.2z" fill="#8a8a8a"/><path d="M326.1 454.2l2.4 2.4M328.5 454.2l-2.4 2.4" stroke="#e0503c" stroke-width="0.7"/></svg><div class="a " style="left:503.5px;top:448.2px;width:115.2px;height:73.8px;background:#fff;box-shadow:0 0 0 0.9px #84c27e"></div><div class="t " style="font-size:7px;transform-origin:left center;left:507.0px;top:453.5px;transform:translateY(-50%) scaleX(0.86);color:#2a2a2a"><b>父SKU</b></div><div class="a " style="left:507.0px;top:459px;width:107.7px;height:0.9px;background:#8cc47e;"></div><div class="a " style="left:507.5px;top:461.7px;width:52px;height:10.4px;background:#fff;border-radius:1.2px;box-shadow:0 0 0 0.6px #d4d4d4"></div><div class="t sb" style="transform-origin:left center;left:511.5px;top:467.59999999999997px;transform:translateY(-50%) scaleX(0.88);">Cushion_01</div><div class="a " style="left:562.5px;top:461.7px;width:52px;height:10.4px;background:#fff;border-radius:1.2px;box-shadow:0 0 0 0.6px #d4d4d4"></div><div class="t sb" style="transform-origin:left center;left:566.5px;top:467.59999999999997px;transform:translateY(-50%) scaleX(0.88);">Portablefans_...</div><div class="a " style="left:507.5px;top:474.8px;width:52px;height:10.4px;background:#c5e0b4;border-radius:1.2px;box-shadow:0 0 0 0.6px #9cc287"></div><div class="t sb" style="transform-origin:left center;left:511.5px;top:480.7px;transform:translateY(-50%) scaleX(0.88);">Raincoat_01</div><div class="a " style="left:562.5px;top:474.8px;width:52px;height:10.4px;background:#fff;border-radius:1.2px;box-shadow:0 0 0 0.6px #d4d4d4"></div><div class="t sb" style="transform-origin:left center;left:566.5px;top:480.7px;transform:translateY(-50%) scaleX(0.88);">Tablefans_01</div><svg width="1080" height="592" viewBox="0 0 1080 592"><g fill="none" stroke="#808080" stroke-width="0.7"><path d="M592.7 451.6h4.4M592.7 453.6h4.4M592.7 455.6h4.4"/><path d="M590.1 451.2l.6.6l1-1.2M590.1 453.2l.6.6l1-1.2M590.1 455.2l.6.6l1-1.2" stroke-width="0.5"/></g><path d="M606.0 450.5h5.6l-2.1 2.5v3.2l-1.4-1v-2.2z" fill="#8a8a8a"/><path d="M609.7 454.2l2.4 2.4M612.1 454.2l-2.4 2.4" stroke="#e0503c" stroke-width="0.7"/></svg><div class="a " style="left:339.2px;top:448.2px;width:160.6px;height:73.8px;background:#fff;box-shadow:0 0 0 0.9px #84c27e"></div><div class="t " style="font-size:6.5px;left:342.4px;top:456.9px;transform:translateY(-50%);color:#222"><b>日期</b></div><div class="a " style="left:341.4px;top:464px;width:154.79999999999998px;height:0.8px;background:#8cc47e;"></div><div class="t " style="font-size:6.3px;left:342.2px;top:474.2px;transform:translateY(-50%);color:#6d9f52">所有期间</div><div class="t " style="font-size:5.8px;left:481.59999999999997px;top:474.2px;transform:translateY(-50%);color:#8a8a8a">日</div><div class="t " style="font-size:5.7px;left:342.5px;top:487.6px;transform:translateY(-50%);color:#777;letter-spacing:-0.05px">2019 年5月</div><div class="t " style="font-size:5.9px;left:342.59999999999997px;top:499px;transform:translateY(-50%);color:#8a8a8a;letter-spacing:-0.25px">16</div><div class="t " style="font-size:5.9px;left:357.3px;top:499px;transform:translateY(-50%);color:#8a8a8a;letter-spacing:-0.25px">17</div><div class="t " style="font-size:5.9px;left:371.95px;top:499px;transform:translateY(-50%);color:#8a8a8a;letter-spacing:-0.25px">18</div><div class="t " style="font-size:5.9px;left:386.6px;top:499px;transform:translateY(-50%);color:#8a8a8a;letter-spacing:-0.25px">19</div><div class="t " style="font-size:5.9px;left:401.25px;top:499px;transform:translateY(-50%);color:#8a8a8a;letter-spacing:-0.25px">20</div><div class="t " style="font-size:5.9px;left:415.90000000000003px;top:499px;transform:translateY(-50%);color:#8a8a8a;letter-spacing:-0.25px">21</div><div class="t " style="font-size:5.9px;left:430.55px;top:499px;transform:translateY(-50%);color:#8a8a8a;letter-spacing:-0.25px">22</div><div class="t " style="font-size:5.9px;left:445.20000000000005px;top:499px;transform:translateY(-50%);color:#8a8a8a;letter-spacing:-0.25px">23</div><div class="t " style="font-size:5.9px;left:459.85px;top:499px;transform:translateY(-50%);color:#8a8a8a;letter-spacing:-0.25px">24</div><div class="t " style="font-size:5.9px;left:474.5px;top:499px;transform:translateY(-50%);color:#8a8a8a;letter-spacing:-0.25px">25</div><div class="t " style="font-size:5.9px;left:489.15px;top:499px;transform:translateY(-50%);color:#8a8a8a;letter-spacing:-0.25px">26</div><div class="a " style="left:342.2px;top:504.7px;width:154.0px;height:8.1px;background:linear-gradient(#cfe6c4,#7bb662)"></div><div class="a " style="left:355.4px;top:504.7px;width:0.6px;height:8.1px;background:#a9cf98;"></div><div class="a " style="left:370.04999999999995px;top:504.7px;width:0.6px;height:8.1px;background:#a9cf98;"></div><div class="a " style="left:384.7px;top:504.7px;width:0.6px;height:8.1px;background:#a9cf98;"></div><div class="a " style="left:399.34999999999997px;top:504.7px;width:0.6px;height:8.1px;background:#a9cf98;"></div><div class="a " style="left:414.0px;top:504.7px;width:0.6px;height:8.1px;background:#a9cf98;"></div><div class="a " style="left:428.65px;top:504.7px;width:0.6px;height:8.1px;background:#a9cf98;"></div><div class="a " style="left:443.3px;top:504.7px;width:0.6px;height:8.1px;background:#a9cf98;"></div><div class="a " style="left:457.95px;top:504.7px;width:0.6px;height:8.1px;background:#a9cf98;"></div><div class="a " style="left:472.59999999999997px;top:504.7px;width:0.6px;height:8.1px;background:#a9cf98;"></div><div class="a " style="left:487.24999999999994px;top:504.7px;width:0.6px;height:8.1px;background:#a9cf98;"></div><div class="a " style="left:342.2px;top:517.8px;width:154.0px;height:3.6px;background:#e2efda;"></div><div class="a " style="left:342.4px;top:516.3px;width:6.8px;height:6px;background:#fff;box-shadow:0 0 0 0.5px #b5b5b5"></div><div class="a " style="left:489.4px;top:516.3px;width:6.8px;height:6px;background:#fff;box-shadow:0 0 0 0.5px #b5b5b5"></div><div class="a " style="left:401.4px;top:516.3px;width:8.2px;height:6px;background:#fff;box-shadow:0 0 0 0.5px #a8a8a8"></div><svg width="1080" height="592" viewBox="0 0 1080 592"><path d="M346.8 518.200l-2 1.500l2 1.500z M491.8 518.200l2 1.500l-2 1.500z" fill="#444"/><path d="M488.6 452.800h6l-2.300 2.700v3.400l-1.400-1v-2.400z" fill="#b9b9b9"/><path d="M492.4 456.600l2.800 2.800M495.2 456.600l-2.800 2.800" stroke="#c6c6c6" stroke-width="0.700"/><path d="M491.2 473.200h2.600l-1.300 1.500z" fill="#aaa"/></svg><div class="a " style="left:622.7px;top:448.2px;width:168.6px;height:73.8px;background:#fff;box-shadow:0 0 0 0.9px #84c27e"></div><div class="t " style="font-size:6.5px;left:625.9000000000001px;top:456.9px;transform:translateY(-50%);color:#222"><b>日期</b></div><div class="a " style="left:624.9000000000001px;top:464px;width:162.79999999999998px;height:0.8px;background:#8cc47e;"></div><div class="t " style="font-size:6.3px;left:625.7px;top:474.2px;transform:translateY(-50%);color:#6d9f52">所有期间</div><div class="t " style="font-size:5.8px;left:773.1px;top:474.2px;transform:translateY(-50%);color:#8a8a8a">日</div><div class="t " style="font-size:5.7px;left:626.0px;top:487.6px;transform:translateY(-50%);color:#777;letter-spacing:-0.05px">2019 年6月 2019 年7月</div><div class="t " style="font-size:5.9px;left:626.1px;top:499px;transform:translateY(-50%);color:#8a8a8a;letter-spacing:-0.25px">29</div><div class="t " style="font-size:5.9px;left:640.8000000000001px;top:499px;transform:translateY(-50%);color:#8a8a8a;letter-spacing:-0.25px">30</div><div class="t " style="font-size:5.9px;left:655.45px;top:499px;transform:translateY(-50%);color:#8a8a8a;letter-spacing:-0.25px">1</div><div class="t " style="font-size:5.9px;left:670.1px;top:499px;transform:translateY(-50%);color:#8a8a8a;letter-spacing:-0.25px">2</div><div class="t " style="font-size:5.9px;left:684.7500000000001px;top:499px;transform:translateY(-50%);color:#8a8a8a;letter-spacing:-0.25px">3</div><div class="t " style="font-size:5.9px;left:699.4000000000001px;top:499px;transform:translateY(-50%);color:#8a8a8a;letter-spacing:-0.25px">4</div><div class="t " style="font-size:5.9px;left:714.0500000000001px;top:499px;transform:translateY(-50%);color:#8a8a8a;letter-spacing:-0.25px">5</div><div class="t " style="font-size:5.9px;left:728.7px;top:499px;transform:translateY(-50%);color:#8a8a8a;letter-spacing:-0.25px">6</div><div class="t " style="font-size:5.9px;left:743.35px;top:499px;transform:translateY(-50%);color:#8a8a8a;letter-spacing:-0.25px">7</div><div class="t " style="font-size:5.9px;left:758.0000000000001px;top:499px;transform:translateY(-50%);color:#8a8a8a;letter-spacing:-0.25px">8</div><div class="t " style="font-size:5.9px;left:772.6500000000001px;top:499px;transform:translateY(-50%);color:#8a8a8a;letter-spacing:-0.25px">9</div><div class="a " style="left:625.7px;top:504.7px;width:162.0px;height:8.1px;background:linear-gradient(#cfe6c4,#7bb662)"></div><div class="a " style="left:638.9000000000001px;top:504.7px;width:0.6px;height:8.1px;background:#a9cf98;"></div><div class="a " style="left:653.5500000000001px;top:504.7px;width:0.6px;height:8.1px;background:#a9cf98;"></div><div class="a " style="left:668.2px;top:504.7px;width:0.6px;height:8.1px;background:#a9cf98;"></div><div class="a " style="left:682.8500000000001px;top:504.7px;width:0.6px;height:8.1px;background:#a9cf98;"></div><div class="a " style="left:697.5000000000001px;top:504.7px;width:0.6px;height:8.1px;background:#a9cf98;"></div><div class="a " style="left:712.1500000000001px;top:504.7px;width:0.6px;height:8.1px;background:#a9cf98;"></div><div class="a " style="left:726.8000000000001px;top:504.7px;width:0.6px;height:8.1px;background:#a9cf98;"></div><div class="a " style="left:741.45px;top:504.7px;width:0.6px;height:8.1px;background:#a9cf98;"></div><div class="a " style="left:756.1000000000001px;top:504.7px;width:0.6px;height:8.1px;background:#a9cf98;"></div><div class="a " style="left:770.7500000000001px;top:504.7px;width:0.6px;height:8.1px;background:#a9cf98;"></div><div class="a " style="left:625.7px;top:517.8px;width:162.0px;height:3.6px;background:#e2efda;"></div><div class="a " style="left:625.9000000000001px;top:516.3px;width:6.8px;height:6px;background:#fff;box-shadow:0 0 0 0.5px #b5b5b5"></div><div class="a " style="left:780.9000000000001px;top:516.3px;width:6.8px;height:6px;background:#fff;box-shadow:0 0 0 0.5px #b5b5b5"></div><div class="a " style="left:706.4px;top:516.3px;width:8.2px;height:6px;background:#fff;box-shadow:0 0 0 0.5px #a8a8a8"></div><svg width="1080" height="592" viewBox="0 0 1080 592"><path d="M630.3 518.200l-2 1.500l2 1.500z M783.3 518.200l2 1.500l-2 1.500z" fill="#444"/><path d="M780.1 452.800h6l-2.300 2.700v3.400l-1.400-1v-2.400z" fill="#b9b9b9"/><path d="M783.9 456.600l2.800 2.800M786.7 456.600l-2.800 2.800" stroke="#c6c6c6" stroke-width="0.700"/><path d="M782.7 473.200h2.600l-1.300 1.500z" fill="#aaa"/></svg><div class="t " style="font-size:13.6px;left:370.5px;top:538.2px;transform:translate(-50%,-50%);color:#333;letter-spacing:5.7px;margin-left:2.8px">店铺数据控制台</div><div class="t " style="font-size:13.6px;left:639px;top:538.2px;transform:translate(-50%,-50%);color:#333;letter-spacing:5.7px;margin-left:2.8px">广告数据控制台</div><div class="t gl" style="left:43.7px;top:78.9px;transform:translate(-50%,-50%);">表格</div><div class="t gl" style="left:147px;top:78.9px;transform:translate(-50%,-50%);">插图</div><div class="t gl" style="left:238.5px;top:78.9px;transform:translate(-50%,-50%);">加载项</div><div class="t gl" style="left:335px;top:78.9px;transform:translate(-50%,-50%);">图表</div><div class="t gl" style="left:424.4px;top:78.9px;transform:translate(-50%,-50%);">演示</div><div class="t gl" style="left:476.9px;top:78.9px;transform:translate(-50%,-50%);">迷你图</div><div class="t gl" style="left:540.9px;top:78.9px;transform:translate(-50%,-50%);">筛选器</div><div class="t gl" style="left:582.5px;top:78.9px;transform:translate(-50%,-50%);">链接</div><div class="t gl" style="left:663.8px;top:78.9px;transform:translate(-50%,-50%);">文本</div><div class="t gl" style="left:755.6px;top:78.9px;transform:translate(-50%,-50%);">符号</div><div class="t rl" style="left:16px;top:60.0px;transform:translate(-50%,-50%);">数据</div><div class="t rl" style="left:16px;top:68.0px;transform:translate(-50%,-50%);">透视表</div><div class="t rl" style="left:44px;top:60.0px;transform:translate(-50%,-50%);color:#b3b3b3;">推荐的</div><div class="t rl" style="left:43.7px;top:68.0px;transform:translate(-50%,-50%);color:#b3b3b3;">数据透视表</div><div class="t rl" style="left:72.3px;top:60.0px;transform:translate(-50%,-50%);">表格</div><div class="t rl" style="left:102.5px;top:60.0px;transform:translate(-50%,-50%);">图片</div><div class="t rl" style="left:125px;top:60.0px;transform:translate(-50%,-50%);">形状</div><div class="t rl" style="left:147px;top:60.0px;transform:translate(-50%,-50%);">图</div><div class="t rl" style="left:147px;top:68.0px;transform:translate(-50%,-50%);">标</div><div class="t rl" style="font-size:6.8px;left:170px;top:42.7px;transform:translateY(-50%);">SmartArt</div><div class="t rl" style="left:170px;top:54.4px;transform:translateY(-50%);">3D 模型</div><div class="t rl" style="left:170px;top:66.1px;transform:translateY(-50%);">屏幕截图</div><div class="t rl" style="font-size:6.25px;left:223.6px;top:46.5px;transform:translateY(-50%);">获取加载项</div><div class="t rl" style="font-size:6.25px;left:223.6px;top:62.9px;transform:translateY(-50%);">我的加载项</div><div class="t rl" style="left:285.6px;top:60.0px;transform:translate(-50%,-50%);">推荐的</div><div class="t rl" style="left:285.6px;top:68.0px;transform:translate(-50%,-50%);">图表</div><div class="t rl" style="left:359.8px;top:60.0px;transform:translate(-50%,-50%);">地图</div><div class="t rl" style="left:387.5px;top:60.0px;transform:translate(-50%,-50%);">数据透视图</div><div class="t rl" style="left:424.6px;top:60.0px;transform:translate(-50%,-50%);color:#b3b3b3;">三维地</div><div class="t rl" style="left:421.5px;top:68.0px;transform:translate(-50%,-50%);color:#b3b3b3;">图</div><div class="t rl" style="left:455.6px;top:60.0px;transform:translate(-50%,-50%);">折线</div><div class="t rl" style="left:477.5px;top:60.0px;transform:translate(-50%,-50%);">柱形</div><div class="t rl" style="left:499.6px;top:60.0px;transform:translate(-50%,-50%);">盈亏</div><div class="t rl" style="left:530.3px;top:60.0px;transform:translate(-50%,-50%);">切片器</div><div class="t rl" style="left:552.5px;top:60.0px;transform:translate(-50%,-50%);">日程表</div><div class="t rl" style="left:583px;top:60.0px;transform:translate(-50%,-50%);">链</div><div class="t rl" style="left:583px;top:68.0px;transform:translate(-50%,-50%);">接</div><div class="t rl" style="left:613.5px;top:60.0px;transform:translate(-50%,-50%);">文本框</div><div class="t rl" style="left:641.6px;top:60.0px;transform:translate(-50%,-50%);">页眉和页脚</div><div class="t rl" style="left:670px;top:60.0px;transform:translate(-50%,-50%);">艺术字</div><div class="t rl" style="left:692px;top:60.0px;transform:translate(-50%,-50%);">签名行</div><div class="t rl" style="left:714px;top:60.0px;transform:translate(-50%,-50%);">对象</div><div class="t rl" style="left:745px;top:60.0px;transform:translate(-50%,-50%);">公式</div><div class="t rl" style="left:767px;top:60.0px;transform:translate(-50%,-50%);">符号</div><svg width="1080" height="90" viewBox="0 0 1080 90"><rect x="87.1" y="36.8" width="0.8" height="44.5" fill="#d2d2d2"/>
<rect x="207.1" y="36.8" width="0.8" height="44.5" fill="#d2d2d2"/>
<rect x="269.1" y="36.8" width="0.8" height="44.5" fill="#d2d2d2"/>
<rect x="409.3" y="36.8" width="0.8" height="44.5" fill="#d2d2d2"/>
<rect x="439.0" y="36.8" width="0.8" height="44.5" fill="#d2d2d2"/>
<rect x="514.2" y="36.8" width="0.8" height="44.5" fill="#d2d2d2"/>
<rect x="567.1" y="36.8" width="0.8" height="44.5" fill="#d2d2d2"/>
<rect x="597.6" y="36.8" width="0.8" height="44.5" fill="#d2d2d2"/>
<rect x="729.2" y="36.8" width="0.8" height="44.5" fill="#d2d2d2"/>
<rect x="782.1" y="36.8" width="0.8" height="44.5" fill="#d2d2d2"/>
<path d="M101.00 66.20h3l-1.5 1.7z" fill="#777"/>
<path d="M123.80 66.20h3l-1.5 1.7z" fill="#777"/>
<path d="M197.10 65.50h3l-1.5 1.7z" fill="#777"/>
<path d="M260.40 61.80h3l-1.5 1.7z" fill="#777"/>
<path d="M358.30 66.20h3l-1.5 1.7z" fill="#777"/>
<path d="M387.50 66.20h3l-1.5 1.7z" fill="#777"/>
<path d="M427.00 66.20h3l-1.5 1.7z" fill="#c0c0c0"/>
<path d="M612.50 66.20h3l-1.5 1.7z" fill="#777"/>
<path d="M669.00 66.20h3l-1.5 1.7z" fill="#777"/>
<path d="M691.00 66.20h3l-1.5 1.7z" fill="#777"/>
<path d="M744.00 66.20h3l-1.5 1.7z" fill="#777"/>
<rect x="8.7" y="38.7" width="13.8" height="13.8" fill="#fff" stroke="#8c8c8c" stroke-width="0.9"/>
<rect x="10" y="40" width="11.4" height="2" fill="#c6c6c6"/><rect x="10" y="42.5" width="2" height="8.9" fill="#c6c6c6"/>
<path d="M13.800 49.500h2.600c2.600 0 3.500-2 3.500-5.600" fill="none" stroke="#3f7fc1" stroke-width="1"/>
<path d="M12.900 49.500l2.300-1.800v3.600z M19.900 42.600l1.800 2.300h-3.600z" fill="#3f7fc1"/>
<rect x="37.700" y="39.600" width="11.600" height="11.600" fill="#f6f6f6" stroke="#cdcdcd" stroke-width="0.8"/>
<rect x="39" y="41" width="8.800" height="1.600" fill="#dcdcdc"/><rect x="39" y="43.400" width="1.800" height="6.400" fill="#dcdcdc"/><path d="M42 45h5M42 47h5" stroke="#e2e2e2" stroke-width="0.600"/>
<text x="48.500" y="54" font-size="13" font-weight="bold" text-anchor="middle" fill="#c2c2c2" textLength="6.8" lengthAdjust="spacingAndGlyphs">?</text>
<rect x="65.300" y="38.500" width="14.200" height="14.300" fill="#fff" stroke="#8c8c8c" stroke-width="0.700"/>
<rect x="65" y="38.200" width="14.800" height="2.500" fill="#3f7fc1"/>
<path d="M65.300 42.700h14.200M65.300 44.700h14.200M65.300 46.700h14.200M65.300 48.700h14.200M65.300 50.700h14.200M69.700 40.700v12M74.800 40.700v12" stroke="#9a9a9a" stroke-width="0.500" fill="none"/>
<path d="M66.800 39.400h1.500M71.500 39.400h1.500M76.400 39.400h1.500" stroke="#fff" stroke-width="0.600"/>
<rect x="95.600" y="38.800" width="14" height="13.800" fill="#fff" stroke="#a2a2a2" stroke-width="1"/>
<path d="M96.700 51.800l4.400-5.900l4.800 5.900z M104 46.700l1.200-.8l3.900 4.600v1.300h-1.200z" fill="#3f7fc1"/>
<circle cx="106.400" cy="42" r="1.500" fill="#e9b95c"/>
<g fill="#fff" stroke="#5b8fd0" stroke-width="0.750"><circle cx="128.900" cy="42.100" r="4.100"/><rect x="117.500" y="40.400" width="8.100" height="8"/><path d="M124.400 44l4.800 4.800l-4.800 4.800l-4.800-4.800z"/></g>
<path d="M140.100 42.300c.8 3.400 3 6 6.400 6c3.600 0 5-3 5-6l2.800-1.700l-3-.6c-.6-1.800-2.200-2.900-4-2.600c-1.900.3-3 2-2.700 4c-1.500.7-3.300 1-4.500.9z" fill="#3f7fc1"/>
<path d="M146 51c-.6-4 2.600-6.700 7.600-6.900c.6 4.600-2.200 7.800-7.600 6.900z" fill="#fff" stroke="#6f6f6f" stroke-width="0.8"/><path d="M144.300 52.700c1.800-2.600 4-4.400 6.800-5.600" fill="none" stroke="#6f6f6f" stroke-width="0.8"/>
<path d="M159.800 37.400h5.600l1.800 2.600h-3l.8 2.400h-3.400l-.8-2.400h-1z" fill="#4f9f78"/>
<rect x="162.300" y="40.600" width="5.800" height="4.800" fill="#fff" stroke="#8a8a8a" stroke-width="0.650"/><path d="M165.200 43h2" stroke="#aaa" stroke-width="0.500"/>
<circle cx="163.700" cy="53.900" r="3.500" fill="none" stroke="#3a86d4" stroke-width="1"/><path d="M163.700 54.200v3M163.700 54.200l-2.700-1.600M163.700 54.200l2.700-1.600" stroke="#3a86d4" stroke-width="0.900"/>
<rect x="162" y="62.500" width="4.900" height="4.200" fill="#fff"/>
<path d="M159.800 69.600v-2h1.100l.5-.7h1.500l.5.700h1.100v2z" fill="#666"/><circle cx="162.150" cy="68.500" r=".75" fill="#f3f3f3"/>
<path d="M165 68.400h3.400M166.700 66.700v3.400" stroke="#3f7fc1" stroke-width="0.950"/>
<g fill="none" stroke="#de6342" stroke-width="0.700"><path d="M213.500 42.200h4.200v7.400h-4.200zM213.500 45.900h8v3.700h-3.800v-3.700"/><path d="M221.500 45.900v3.700"/><path d="M220 41.400v3M218.500 42.900h3"/></g>
<path d="M215.600 60.600l3.200-2.500l3.200 1.500v4l-3.200 2.300l-1.200-.7v-2.200h-2z" fill="#1b6fd6"/><circle cx="215.700" cy="64.200" r="1.550" fill="#1b6fd6"/>
<rect x="279" y="43.400" width="3.600" height="9.200" fill="#3f7fc1"/><rect x="283.400" y="39" width="3.400" height="13.600" fill="#e9b95c"/>
<path d="M288 41.600h3M288 42.800h3" stroke="#999" stroke-width="0.5"/>
<text x="290.400" y="54" font-size="15" font-weight="bold" text-anchor="middle" fill="#3f7fc1" textLength="7" lengthAdjust="spacingAndGlyphs">?</text>
<rect x="298.600" y="40.400" width="2" height="4.800" fill="#3f7fc1"/><rect x="301.100" y="38.200" width="2.300" height="7" fill="#e9b95c"/><rect x="304" y="39.600" width="1.900" height="5.600" fill="#666"/>
<path d="M308.50 41.10h3l-1.5 1.7z" fill="#777"/>
<path d="M298.300 50.200l2.700 7.300l2.200-6.800l2.200 6.600l1.400-4.400" fill="none" stroke="#8a8a8a" stroke-width="0.700"/><path d="M298.300 57.500l2.500-6l2.400 5.200l2.200-6.300l1.400 5" fill="none" stroke="#3f7fc1" stroke-width="0.800"/>
<path d="M308.50 53.00h3l-1.5 1.7z" fill="#777"/>
<circle cx="302.200" cy="65.900" r="3.900" fill="#3f7fc1"/><path d="M302.200 65.900v-3.900a3.900 3.900 0 0 0-3.900 3.900z" fill="#e9b95c"/><path d="M302.200 65.900h-3.900a3.900 3.900 0 0 0 1.200 2.800z" fill="#666"/>
<path d="M308.50 65.40h3l-1.5 1.7z" fill="#777"/>
<rect x="315.400" y="37.600" width="3" height="8" fill="#3f7fc1"/><rect x="319.200" y="37.600" width="4.400" height="5" fill="#e9b95c"/><rect x="319.200" y="42.600" width="4.400" height="3" fill="#777"/>
<path d="M326.00 41.10h3l-1.5 1.7z" fill="#777"/>
<rect x="315.600" y="53" width="1.600" height="4" fill="#3f7fc1"/><rect x="318" y="50.400" width="1.600" height="6.600" fill="#3f7fc1"/><rect x="320.400" y="52" width="1.600" height="5" fill="#3f7fc1"/><rect x="322.600" y="54" width="1.400" height="3" fill="#3f7fc1"/>
<path d="M326.00 53.00h3l-1.5 1.7z" fill="#777"/>
<path d="M316.600 62v7h7" fill="none" stroke="#999" stroke-width="0.6"/><g fill="#3f7fc1"><rect x="318" y="66.200" width="1" height="1"/><rect x="319.800" y="64" width="1" height="1"/><rect x="322" y="65" width="1" height="1"/></g><g fill="#e9b95c"><rect x="318.800" y="64.800" width="1" height="1"/><rect x="321" y="63" width="1" height="1"/><rect x="322.600" y="66.800" width="1" height="1"/></g>
<path d="M326.00 65.40h3l-1.5 1.7z" fill="#777"/>
<rect x="333.200" y="41.400" width="1.800" height="3.600" fill="#3f7fc1"/><rect x="335.400" y="38.200" width="1.800" height="3.600" fill="#3f7fc1"/><rect x="337.600" y="39.800" width="1.800" height="3" fill="#e9b95c"/><rect x="339.600" y="42.600" width="1.600" height="2.600" fill="#666"/>
<path d="M343.30 41.10h3l-1.5 1.7z" fill="#777"/>
<rect x="333.400" y="51" width="2" height="6.400" fill="#3f7fc1"/><rect x="336" y="52.600" width="2" height="4.800" fill="#e9b95c"/><rect x="338.600" y="54" width="2" height="3.400" fill="#888"/><rect x="334" y="49.800" width="2" height="1.200" fill="#3f7fc1"/>
<path d="M343.30 53.00h3l-1.5 1.7z" fill="#777"/>
<circle cx="360.600" cy="44.600" r="5.400" fill="#eef3ef" stroke="#9a9a9a" stroke-width="0.7"/>
<path d="M357 42.400l2.400-2l3 .4l1.400 2l-1.800 1.400l1.600 1.800l-.8 2.400l-2.200-.6l-.6-2.400l-2.400-.8z M363.600 40.600l1.600 1.200l.2 1.600l-1.400-.6z" fill="#4c9b6e"/>
<path d="M355.400 40.400a6.600 6.600 0 0 0 1.800 9.600M355.800 53.400h8.400M360 51v2.400" fill="none" stroke="#8a8a8a" stroke-width="0.8"/>
<rect x="380.200" y="43.400" width="3.400" height="9.200" fill="#3f7fc1"/><rect x="384.400" y="39.200" width="3.200" height="13.400" fill="#e9b95c"/>
<rect x="389" y="41.600" width="3.200" height="3.200" fill="#7a7a7a"/><rect x="388.400" y="45.600" width="7.400" height="7.400" fill="#f5f5f5" stroke="#b5b5b5" stroke-width="0.7"/>
<path d="M390.400 51l3-3M393.600 48v1.800M393.600 48h-1.800" stroke="#3f7fc1" stroke-width="0.8" fill="none"/>
<path d="M403.400 77.600h-.1v3.400M403.300 77.700h3.400" stroke="#777" stroke-width="0.6" fill="none"/><path d="M404.800 79.200l2 2M406.900 79.600v1.700h-1.700" stroke="#777" stroke-width="0.6" fill="none"/>
<g fill="#c4c4c4"><rect x="417.200" y="41.400" width="2.400" height="11"/><rect x="429.400" y="41.400" width="2.400" height="11"/><rect x="420.200" y="40" width="1.800" height="12.400" fill="#b4b4b4"/><rect x="427" y="40" width="1.800" height="12.400" fill="#b4b4b4"/><rect x="423.200" y="38.800" width="2.600" height="6"/></g><ellipse cx="424.500" cy="48.600" rx="3.600" ry="3.400" fill="#ededed" stroke="#b9b9b9" stroke-width="0.8"/><path d="M421 48.600h7M424.500 45.200v6.800" stroke="#b9b9b9" stroke-width="0.6"/>
<path d="M449.5 38.500v14M447.5 40.500h15M447.5 50h15" stroke="#8a8a8a" stroke-width="0.6" fill="none"/>
<path d="M472.0 38.500v14M470.0 40.500h15M470.0 50h15" stroke="#8a8a8a" stroke-width="0.6" fill="none"/>
<path d="M494.5 38.500v14M492.5 40.500h15M492.5 50h15" stroke="#8a8a8a" stroke-width="0.6" fill="none"/>
<path d="M450 48l2.200-4.400l2.600 4.400l3.600-5.600l3.200 3.800" fill="none" stroke="#3f7fc1" stroke-width="0.8"/>
<g fill="#3f7fc1"><rect x="472.600" y="45.400" width="1.600" height="4.400"/><rect x="475.200" y="43.200" width="1.600" height="6.600"/><rect x="477.800" y="44.800" width="1.600" height="5"/><rect x="480.400" y="46.400" width="1.600" height="3.400"/><rect x="482.800" y="47.400" width="1.400" height="2.400"/></g>
<g fill="#3f7fc1"><rect x="494.600" y="42" width="1.400" height="2.600"/><rect x="497.200" y="42" width="1.400" height="2.600"/><rect x="504.400" y="42" width="1.400" height="3.400"/></g><g fill="#d9583b"><rect x="499.600" y="46" width="1.400" height="2.800"/><rect x="502" y="46" width="1.400" height="2.800"/></g>
<rect x="523.400" y="38.800" width="14" height="13.800" fill="#fff" stroke="#9a9a9a" stroke-width="0.8"/><rect x="523.400" y="38.400" width="14" height="1.200" fill="#8a8a8a"/>
<rect x="524.800" y="41.800" width="11" height="1.600" fill="#3f7fc1"/><rect x="524.800" y="45.200" width="5" height="1.400" fill="#3f7fc1"/><rect x="524.800" y="49" width="5" height="1.400" fill="#9db9dc"/><rect x="534" y="49" width="2" height="1.400" fill="#9db9dc"/>
<path d="M528.600 43.800h8.400l-3.400 4v4l-1.600-1v-3z" fill="#7d7d7d"/>
<rect x="545.400" y="41" width="14.400" height="6.600" fill="#fff" stroke="#9a9a9a" stroke-width="0.7"/><rect x="545.400" y="40.600" width="14.400" height="1.400" fill="#8a8a8a"/><rect x="547" y="43.800" width="6" height="1.400" fill="#3f7fc1"/><path d="M554 44.500h4" stroke="#bbb" stroke-width="0.6"/>
<path d="M551.600 45.600h9l-3.600 4.200v4l-1.600-1v-3z" fill="#7d7d7d"/>
<circle cx="581.800" cy="44.600" r="6.200" fill="#fbfbfb" stroke="#a5a5a5" stroke-width="0.7"/><path d="M575.600 44.600h12.400M576.600 41.600h10.400M576.600 47.600h10.400M581.800 38.400v12.400M581.800 38.400c-4 3.400-4 9 0 12.400M581.800 38.400c4 3.400 4 9 0 12.400" fill="none" stroke="#a5a5a5" stroke-width="0.5"/>
<rect x="580.800" y="49.600" width="10.400" height="4.400" rx="2.200" fill="#f3f3f3"/><rect x="581.600" y="50.200" width="5" height="3.200" rx="1.600" fill="none" stroke="#3f7fc1" stroke-width="1"/><rect x="585.400" y="50.200" width="5" height="3.200" rx="1.600" fill="none" stroke="#3f7fc1" stroke-width="1"/>
<rect x="606.400" y="39.400" width="14.200" height="12.400" fill="#fff" stroke="#8f8f8f" stroke-width="0.700"/><text x="610.300" y="46.200" font-size="5.600" fill="#3f7fc1" text-anchor="middle" font-weight="bold">A</text><path d="M613.800 42.200h5.200M613.800 44.200h5.200M613.800 46.200h5.200M608 48.200h11M608 50.100h11" stroke="#b4b4b4" stroke-width="0.450"/>
<path d="M636.800 38.600h7l3.400 3.400v10.800h-10.400z" fill="#fff" stroke="#a9a9a9" stroke-width="0.7"/><path d="M643.800 38.600v3.400h3.400" fill="none" stroke="#a9a9a9" stroke-width="0.6"/><rect x="638.200" y="40.200" width="3.800" height="2.400" fill="#e9b95c"/><rect x="638.200" y="48.800" width="7.600" height="2.600" fill="#e9b95c"/>
<text x="669.800" y="52.3" font-size="16.800" font-style="italic" text-anchor="middle" fill="#3f7fc1" stroke="#3f7fc1" stroke-width="0.350">A</text>
<path d="M686.600 38.600h7l3.400 3.400v10.800h-10.400z" fill="#fff" stroke="#a9a9a9" stroke-width="0.7"/><path d="M693.600 38.600v3.400h3.400" fill="none" stroke="#a9a9a9" stroke-width="0.6"/><path d="M688.200 50.200h4.600" stroke="#3f7fc1" stroke-width="0.5"/><path d="M692.400 50l1-2.400l6-5.600l1.200 1.200l-6 5.800z" fill="#3f7fc1"/>
<path d="M710 38.600h7.400l3.400 3.400v10.800h-10.800z" fill="#fff" stroke="#a9a9a9" stroke-width="0.7"/><path d="M717.400 38.600v3.400h3.400" fill="none" stroke="#a9a9a9" stroke-width="0.6"/><rect x="707.400" y="43.200" width="7.200" height="6" fill="#fff" stroke="#3f7fc1" stroke-width="0.8"/><rect x="707.400" y="43.200" width="7.200" height="1.800" fill="#3f7fc1"/>
<text x="744.600" y="51.700" font-size="23" text-anchor="middle" fill="#3f7fc1" font-weight="bold" style="font-family:'Liberation Serif','DejaVu Serif',serif">π</text>
<text x="766.800" y="52.400" font-size="19" text-anchor="middle" fill="#3f7fc1" font-weight="bold" style="font-family:'Liberation Serif','DejaVu Serif',serif">Ω</text></svg>
<div class="a" id="vscroll"></div>
<div class="a " style="left:1068px;top:109px;width:1px;height:456px;background:#d2d2d2;"></div><div class="a " style="left:1070.5px;top:119px;width:8px;height:445px;background:#dcdcdc;"></div><div class="a " style="left:1070.5px;top:119px;width:8px;height:218px;background:#fff;box-shadow:0 0 0 0.5px #cdcdcd"></div><div class="a " style="left:1070.5px;top:110.5px;width:8px;height:7.5px;background:#fff;box-shadow:0 0 0 0.5px #b5b5b5"></div><div class="a " style="left:1070.5px;top:557.5px;width:8px;height:7px;background:#fff;box-shadow:0 0 0 0.5px #b5b5b5"></div><div class="a" id="tabbar"></div>
<div class="a" id="status"></div>
<div class="a " style="left:14px;top:562px;width:592.7px;height:2.5px;background:#4a86c5;"></div><div class="a " style="left:606px;top:563.7px;width:463px;height:1px;background:#c4c4c4;"></div><div class="a " style="left:53.5px;top:565px;width:57.5px;height:13px;background:#fff;"></div><div class="a " style="left:53.5px;top:576.8px;width:57.5px;height:1.1px;background:#217346;"></div><div class="t st" style="left:82.3px;top:571.4px;transform:translate(-50%,-50%);color:#2c7a50;">1.可视化视图1</div><div class="t st" style="left:125.8px;top:571.4px;transform:translate(-50%,-50%);">视图2</div><div class="t st" style="left:171px;top:571.4px;transform:translate(-50%,-50%);">2.关键词分析表</div><div class="t st" style="left:231.7px;top:571.4px;transform:translate(-50%,-50%);">3.店铺数据录入</div><div class="t st" style="left:303px;top:571.4px;transform:translate(-50%,-50%);">4.广告-搜索词数据录入</div><div class="t st" style="left:390.6px;top:571.4px;transform:translate(-50%,-50%);">5.广告-商品推广数据录入</div><div class="t st" style="left:466.5px;top:571.4px;transform:translate(-50%,-50%);">6.SKU信息录入</div><div class="t st" style="left:513px;top:571.4px;transform:translate(-50%,-50%);">7.教程</div><svg width="1080" height="592" viewBox="0 0 1080 592"><rect x="141.0" y="567" width="0.8" height="9.5" fill="#bdbdbd"/><rect x="200.8" y="567" width="0.8" height="9.5" fill="#bdbdbd"/><rect x="260.8" y="567" width="0.8" height="9.5" fill="#bdbdbd"/><rect x="345.2" y="567" width="0.8" height="9.5" fill="#bdbdbd"/><rect x="436.5" y="567" width="0.8" height="9.5" fill="#bdbdbd"/><rect x="497.2" y="567" width="0.8" height="9.5" fill="#bdbdbd"/><rect x="529.0" y="567" width="0.8" height="9.5" fill="#bdbdbd"/>
<path d="M17.5 569.6l-2 1.8l2 1.8z M29.5 569.6l2 1.8l-2 1.8z" fill="#c3c3c3"/>
<circle cx="550.8" cy="571.4" r="3.2" fill="none" stroke="#c8c8c8" stroke-width="0.7"/><path d="M549.2 571.4h3.2M550.8 569.8v3.2" stroke="#c8c8c8" stroke-width="0.7"/>
<g fill="#b5b5b5"><rect x="778" y="568.5" width="1" height="1"/><rect x="778" y="570.5" width="1" height="1"/><rect x="778" y="572.5" width="1" height="1"/><rect x="778" y="574.5" width="1" height="1"/></g>
<rect x="786.8" y="568.7" width="6" height="7" fill="#fff" stroke="#b5b5b5" stroke-width="0.5"/>
<rect x="794.5" y="568.7" width="258" height="7" fill="#fff" stroke="#b5b5b5" stroke-width="0.5"/>
<rect x="1052.5" y="568.7" width="9" height="7" fill="#dcdcdc"/>
<rect x="1062" y="568.7" width="6.5" height="7" fill="#fff" stroke="#b5b5b5" stroke-width="0.5"/>
<path d="M791 570.5v3.4l-2.2-1.7z M1064.3 570.5v3.4l2.2-1.7z" fill="#555"/>
<path d="M1072.4 115.3h4.2l-2.1-2.3z M1072.4 560h4.2l-2.1 2.3z" fill="#555"/>
<!-- status bar -->
<rect x="913" y="579.5" width="21" height="11" fill="#c8c8c8"/>
<g fill="none" stroke="#666" stroke-width="0.7">
<rect x="920.5" y="581.6" width="6.4" height="6.4"/><path d="M922.6 581.6v6.4M924.8 581.6v6.4M920.5 583.7h6.4M920.5 585.9h6.4"/>
<rect x="941.5" y="581.6" width="6.4" height="6.4"/><rect x="943.2" y="582.8" width="3" height="4" />
<rect x="962.5" y="581.6" width="6.4" height="6.4"/><path d="M964.5 581.6v3.2h2.6v-3.2"/>
<path d="M980 584.8h3.6 M1041.5 584.8h3.6 M1043.3 583v3.6"/>
<path d="M987 584.8h52" stroke="#9a9a9a" stroke-width="0.6"/>
</g>
<rect x="1010" y="582" width="2" height="5.6" fill="#555"/>
<rect x="0" y="590.6" width="1080" height="1.4" fill="#3d3d3d"/>
</svg>
<div class="t " style="font-size:6.6px;left:1059.5px;top:584.8px;transform:translate(-50%,-50%);color:#444">92%</div>
</body></html>
